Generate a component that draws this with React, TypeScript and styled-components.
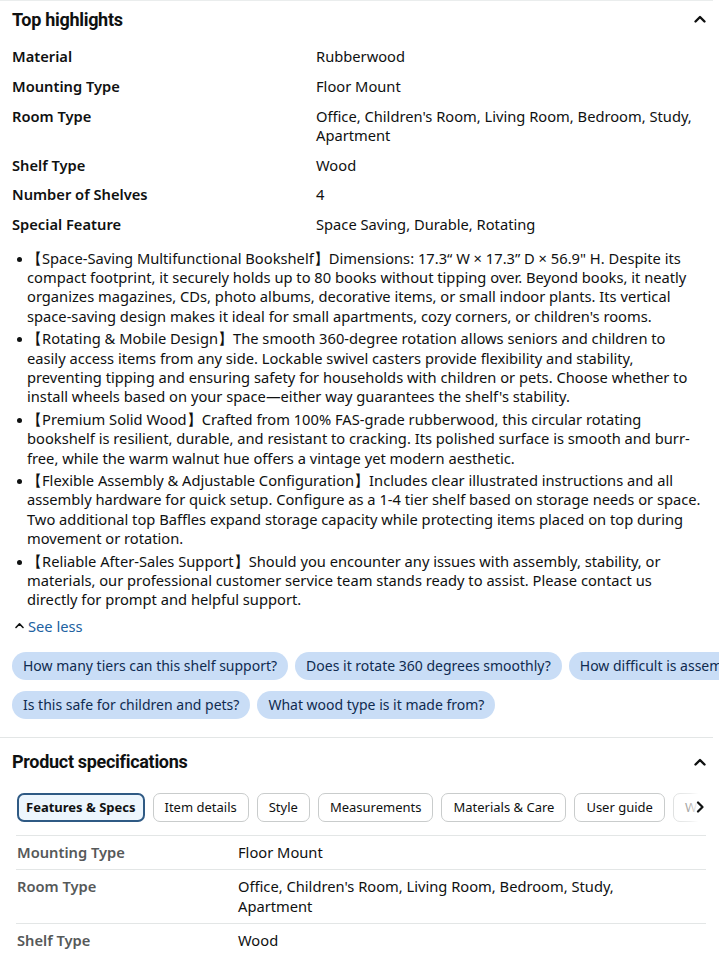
import React from 'react'
import styled, { createGlobalStyle } from 'styled-components'

const GlobalStyle = createGlobalStyle`
  html, body {
    margin: 0;
    padding: 0;
    background: #ffffff;
  }
  body {
    font-family: 'Noto Sans', 'Open Sans', Arial, sans-serif;
    color: #0f1111;
  }
`

const highlights: [string, string][] = [
  ['Material', 'Rubberwood'],
  ['Mounting Type', 'Floor Mount'],
  ['Room Type', "Office, Children's Room, Living Room, Bedroom, Study, Apartment"],
  ['Shelf Type', 'Wood'],
  ['Number of Shelves', '4'],
  ['Special Feature', 'Space Saving, Durable, Rotating'],
]

const bullets = [
  '【Space-Saving Multifunctional Bookshelf】Dimensions: 17.3“ W × 17.3” D × 56.9" H. Despite its compact footprint, it securely holds up to 80 books without tipping over. Beyond books, it neatly organizes magazines, CDs, photo albums, decorative items, or small indoor plants. Its vertical space-saving design makes it ideal for small apartments, cozy corners, or children\'s rooms.',
  '【Rotating & Mobile Design】The smooth 360-degree rotation allows seniors and children to easily access items from any side. Lockable swivel casters provide flexibility and stability, preventing tipping and ensuring safety for households with children or pets. Choose whether to install wheels based on your space—either way guarantees the shelf\'s stability.',
  '【Premium Solid Wood】Crafted from 100% FAS-grade rubberwood, this circular rotating bookshelf is resilient, durable, and resistant to cracking. Its polished surface is smooth and burr-free, while the warm walnut hue offers a vintage yet modern aesthetic.',
  '【Flexible Assembly & Adjustable Configuration】Includes clear illustrated instructions and all assembly hardware for quick setup. Configure as a 1-4 tier shelf based on storage needs or space. Two additional top Baffles expand storage capacity while protecting items placed on top during movement or rotation.',
  '【Reliable After-Sales Support】Should you encounter any issues with assembly, stability, or materials, our professional customer service team stands ready to assist. Please contact us directly for prompt and helpful support.',
]

const questionRows = [
  ['How many tiers can this shelf support?', 'Does it rotate 360 degrees smoothly?', 'How difficult is assembly?'],
  ['Is this safe for children and pets?', 'What wood type is it made from?'],
]

const tabs = ['Features & Specs', 'Item details', 'Style', 'Measurements', 'Materials & Care', 'User guide', 'Warranty']

const specs: [string, string][] = [
  ['Mounting Type', 'Floor Mount'],
  ['Room Type', "Office, Children's Room, Living Room, Bedroom, Study, Apartment"],
  ['Shelf Type', 'Wood'],
]

const ChevronUp = ({ size = 14, stroke = 2.4 }: { size?: number; stroke?: number }) => (
  <svg width={size} height={size} viewBox="0 0 14 14" fill="none">
    <path d="M2.5 9.5 L7 5 L11.5 9.5" stroke="#0f1111" strokeWidth={stroke} strokeLinecap="round" strokeLinejoin="round" />
  </svg>
)

const App = () => {
  return (
    <>
      <GlobalStyle />
      <Page>
        <Section>
          <SectionHeader>
            <SectionTitle>Top highlights</SectionTitle>
            <ToggleBtn><ChevronUp /></ToggleBtn>
          </SectionHeader>

          <HighlightTable>
            {highlights.map(([k, v]) => (
              <HighlightRow key={k}>
                <HighlightLabel>{k}</HighlightLabel>
                <HighlightValue>{v}</HighlightValue>
              </HighlightRow>
            ))}
          </HighlightTable>

          <BulletList>
            {bullets.map((b, i) => (
              <li key={i}>{b}</li>
            ))}
          </BulletList>

          <SeeLess>
            <ChevronUp size={11} stroke={2} />
            See less
          </SeeLess>

          <Questions>
            {questionRows.map((row, i) => (
              <QuestionRow key={i}>
                {row.map((q) => (
                  <QuestionChip key={q}>{q}</QuestionChip>
                ))}
              </QuestionRow>
            ))}
          </Questions>
        </Section>

        <Section $divider>
          <SectionHeader>
            <SectionTitle>Product specifications</SectionTitle>
            <ToggleBtn><ChevronUp /></ToggleBtn>
          </SectionHeader>

          <TabStrip>
            <TabTrack>
              {tabs.map((t, i) => (
                <Tab key={t} $active={i === 0}>{t}</Tab>
              ))}
            </TabTrack>
            <TabFade>
              <svg width="9" height="12" viewBox="0 0 9 12" fill="none">
                <path d="M2 1.5 L6.5 6 L2 10.5" stroke="#0f1111" strokeWidth="2.2" strokeLinecap="round" strokeLinejoin="round" />
              </svg>
            </TabFade>
          </TabStrip>

          <SpecTable>
            {specs.map(([k, v]) => (
              <SpecRow key={k}>
                <SpecLabel>{k}</SpecLabel>
                <SpecValue>{v}</SpecValue>
              </SpecRow>
            ))}
          </SpecTable>
        </Section>
      </Page>
    </>
  )
}

const Page = styled.div`
  width: 719px;
  overflow: hidden;
`

const Section = styled.section<{ $divider?: boolean }>`
  margin-right: 6px;
  padding: ${(p) => (p.$divider ? '6px' : '0')} 0 0 12px;
  border-top: 1px solid ${(p) => (p.$divider ? '#e3e6e6' : '#eaeded')};
  margin-top: ${(p) => (p.$divider ? '18px' : '0')};
`

const SectionHeader = styled.div`
  display: flex;
  align-items: center;
  justify-content: space-between;
  height: 36px;
`

const SectionTitle = styled.h2`
  margin: 0;
  font-family: 'Roboto', 'Liberation Sans', sans-serif;
  font-weight: 700;
  font-size: 18px;
  letter-spacing: -0.3px;
  color: #0f1111;
`

const ToggleBtn = styled.div`
  width: 26px;
  display: flex;
  justify-content: center;
`

const HighlightTable = styled.div`
  display: flex;
  flex-direction: column;
  gap: 10.5px;
  margin-top: 10px;
`

const HighlightRow = styled.div`
  display: grid;
  grid-template-columns: 304px 1fr;
  font-size: 14.7px;
  line-height: 19.3px;
`

const HighlightLabel = styled.div`
  font-weight: 600;
`

const HighlightValue = styled.div``

const BulletList = styled.ul`
  margin: 14px 0 0;
  padding: 0 8px 0 15px;
  list-style: none;
  font-size: 14.7px;
  line-height: 19.4px;

  li {
    position: relative;
    margin-bottom: 3px;
  }

  li::before {
    content: '';
    position: absolute;
    left: -10px;
    top: 8px;
    width: 5px;
    height: 5px;
    border-radius: 50%;
    background: #0f1111;
  }
`

const SeeLess = styled.div`
  display: flex;
  align-items: center;
  gap: 3px;
  margin-top: 6px;
  padding-left: 2px;
  font-size: 14.7px;
  color: #2162a1;
`

const Questions = styled.div`
  display: flex;
  flex-direction: column;
  gap: 11px;
  margin: 16px -6px 0 0;
`

const QuestionRow = styled.div`
  display: flex;
  gap: 7px;
  white-space: nowrap;
`

const QuestionChip = styled.div`
  flex-shrink: 0;
  background: #c9ddf6;
  color: #0f2b50;
  font-size: 14px;
  line-height: 28px;
  height: 28px;
  padding: 0 11px;
  border-radius: 14px;
`

const TabStrip = styled.div`
  position: relative;
  margin: 12px 7px 0 4px;
  overflow: hidden;
`

const TabTrack = styled.div`
  display: flex;
  gap: 8px;
  white-space: nowrap;
  padding: 1px 0 13px 1px;
  border-bottom: 1px solid #e3e6e6;
`

const Tab = styled.div<{ $active?: boolean }>`
  flex-shrink: 0;
  box-sizing: border-box;
  height: 29px;
  line-height: ${(p) => (p.$active ? '25px' : '27px')};
  padding: 0 ${(p) => (p.$active ? '7px' : '11px')};
  font-size: 13px;
  border-radius: 7px;
  border: ${(p) => (p.$active ? '2px solid #2f5a84' : '1px solid #c9cccc')};
  background: ${(p) => (p.$active ? '#edf6fd' : '#ffffff')};
  font-weight: ${(p) => (p.$active ? 700 : 400)};
  color: #0f1111;
`

const TabFade = styled.div`
  position: absolute;
  top: 0;
  right: 0;
  width: 36px;
  height: 31px;
  display: flex;
  align-items: center;
  justify-content: flex-end;
  padding-right: 1px;
  background: linear-gradient(to right, rgba(255, 255, 255, 0.35), rgba(255, 255, 255, 0.65) 55%, #ffffff 80%);
`

const SpecTable = styled.div`
  margin: 0 7px 0 4px;
`

const SpecRow = styled.div`
  display: grid;
  grid-template-columns: 221px 1fr;
  padding: 7px 0 7px 1px;
  border-bottom: 1px solid #e3e6e6;
  font-size: 14.7px;
  line-height: 19.5px;
`

const SpecLabel = styled.div`
  font-weight: 600;
  color: #565959;
`

const SpecValue = styled.div`
  color: #0f1111;
  padding-right: 60px;
`

export default App
